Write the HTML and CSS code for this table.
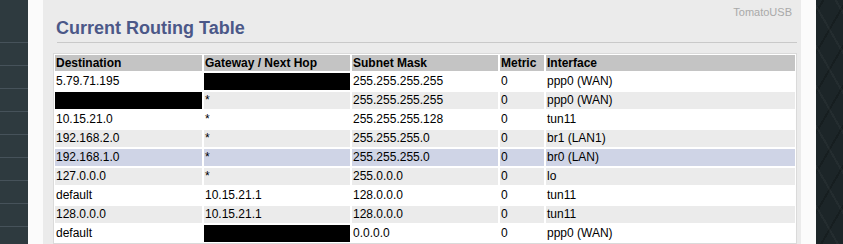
FILE: index.html
```html
<!DOCTYPE html>
<html lang="en">
<head>
    <meta charset="UTF-8">
    <title>Current Routing Table</title>
    <link rel="stylesheet" href="styles.css">
</head>
<body>
    <div class="page">
        <div class="sidebar">
            <div class="nav-item"></div>
            <div class="nav-item"></div>
            <div class="nav-item"></div>
            <div class="nav-item"></div>
            <div class="nav-item"></div>
            <div class="nav-item"></div>
            <div class="nav-item"></div>
            <div class="nav-item"></div>
            <div class="nav-item"></div>
        </div>

        <div class="gutter"></div>

        <div class="content">
            <div class="header">
                <h1>Current Routing Table</h1>
                <div class="brand">TomatoUSB</div>
            </div>
            <div class="rule"></div>

            <table class="grid">
                <thead>
                    <tr>
                        <th class="col-dest">Destination</th>
                        <th class="col-gw">Gateway / Next Hop</th>
                        <th class="col-mask">Subnet Mask</th>
                        <th class="col-metric">Metric</th>
                        <th>Interface</th>
                    </tr>
                </thead>
                <tbody>
                    <tr class="even">
                        <td>5.79.71.195</td>
                        <td class="redact"></td>
                        <td>255.255.255.255</td>
                        <td>0</td>
                        <td>ppp0 (WAN)</td>
                    </tr>
                    <tr class="odd">
                        <td class="redact"></td>
                        <td>*</td>
                        <td>255.255.255.255</td>
                        <td>0</td>
                        <td>ppp0 (WAN)</td>
                    </tr>
                    <tr class="even">
                        <td>10.15.21.0</td>
                        <td>*</td>
                        <td>255.255.255.128</td>
                        <td>0</td>
                        <td>tun11</td>
                    </tr>
                    <tr class="odd">
                        <td>192.168.2.0</td>
                        <td>*</td>
                        <td>255.255.255.0</td>
                        <td>0</td>
                        <td>br1 (LAN1)</td>
                    </tr>
                    <tr class="hover">
                        <td>192.168.1.0</td>
                        <td>*</td>
                        <td>255.255.255.0</td>
                        <td>0</td>
                        <td>br0 (LAN)</td>
                    </tr>
                    <tr class="odd">
                        <td>127.0.0.0</td>
                        <td>*</td>
                        <td>255.0.0.0</td>
                        <td>0</td>
                        <td>lo</td>
                    </tr>
                    <tr class="even">
                        <td>default</td>
                        <td>10.15.21.1</td>
                        <td>128.0.0.0</td>
                        <td>0</td>
                        <td>tun11</td>
                    </tr>
                    <tr class="odd">
                        <td>128.0.0.0</td>
                        <td>10.15.21.1</td>
                        <td>128.0.0.0</td>
                        <td>0</td>
                        <td>tun11</td>
                    </tr>
                    <tr class="even">
                        <td>default</td>
                        <td class="redact"></td>
                        <td>0.0.0.0</td>
                        <td>0</td>
                        <td>ppp0 (WAN)</td>
                    </tr>
                </tbody>
            </table>
        </div>

        <div class="gutter"></div>
        <div class="backdrop"></div>
    </div>
</body>
</html>
```

FILE: styles.css
```css
* {
    margin: 0;
    padding: 0;
    box-sizing: border-box;
}

html, body {
    height: 100%;
    overflow: hidden;
}

body {
    font-family: "Liberation Sans", Arial, sans-serif;
    font-size: 12px;
    color: #000;
    background: #fff;
}

.page {
    display: flex;
    height: 100%;
}

.sidebar {
    width: 28px;
    background: #2e3a3f;
    padding-top: 42px;
}

.nav-item {
    height: 23px;
    border-top: 1px solid #46525a;
}

.gutter {
    width: 15px;
    background: #fbfbfb;
}

.content {
    width: 758px;
    background: #ebebeb;
    padding: 6px 4px 0 10px;
}

.header {
    display: flex;
    justify-content: space-between;
    align-items: flex-start;
}

.header h1 {
    margin-top: 11px;
    padding-left: 3px;
    font-size: 18px;
    line-height: 22px;
    font-weight: bold;
    color: #4b5888;
}

.brand {
    margin-right: 5px;
    font-size: 11px;
    line-height: 13px;
    color: #a9a9a9;
}

.rule {
    margin: 3px 0 0 4px;
    height: 1px;
    background: #c9c9c9;
}

.grid {
    margin-top: 10px;
    width: 744px;
    table-layout: fixed;
    border-collapse: separate;
    border-spacing: 0;
    border: 1px solid #dadada;
    background: #fff;
}

.grid th,
.grid td {
    border: 1px solid #fff;
    padding: 1px 2px 1px 1px;
    text-align: left;
    white-space: nowrap;
    overflow: hidden;
    line-height: 15px;
}

.grid th {
    background: #c4c4c4;
    font-weight: bold;
    line-height: 14px;
}

.col-dest { width: 149px; }
.col-gw { width: 148px; }
.col-mask { width: 148px; }
.col-metric { width: 46px; }

.grid tr.even td {
    background: #fff;
}

.grid tr.odd td {
    background: #ebebeb;
}

.grid tr.hover td {
    background: #cfd4e6;
}

.grid td.redact {
    background: #000 !important;
}

.backdrop {
    flex: 1;
    background-color: #1c2528;
    background-image:
        repeating-linear-gradient(60deg, transparent 0 18px, rgba(255, 255, 255, 0.035) 18px 20px),
        repeating-linear-gradient(-60deg, transparent 0 18px, rgba(0, 0, 0, 0.2) 18px 20px);
}
```
